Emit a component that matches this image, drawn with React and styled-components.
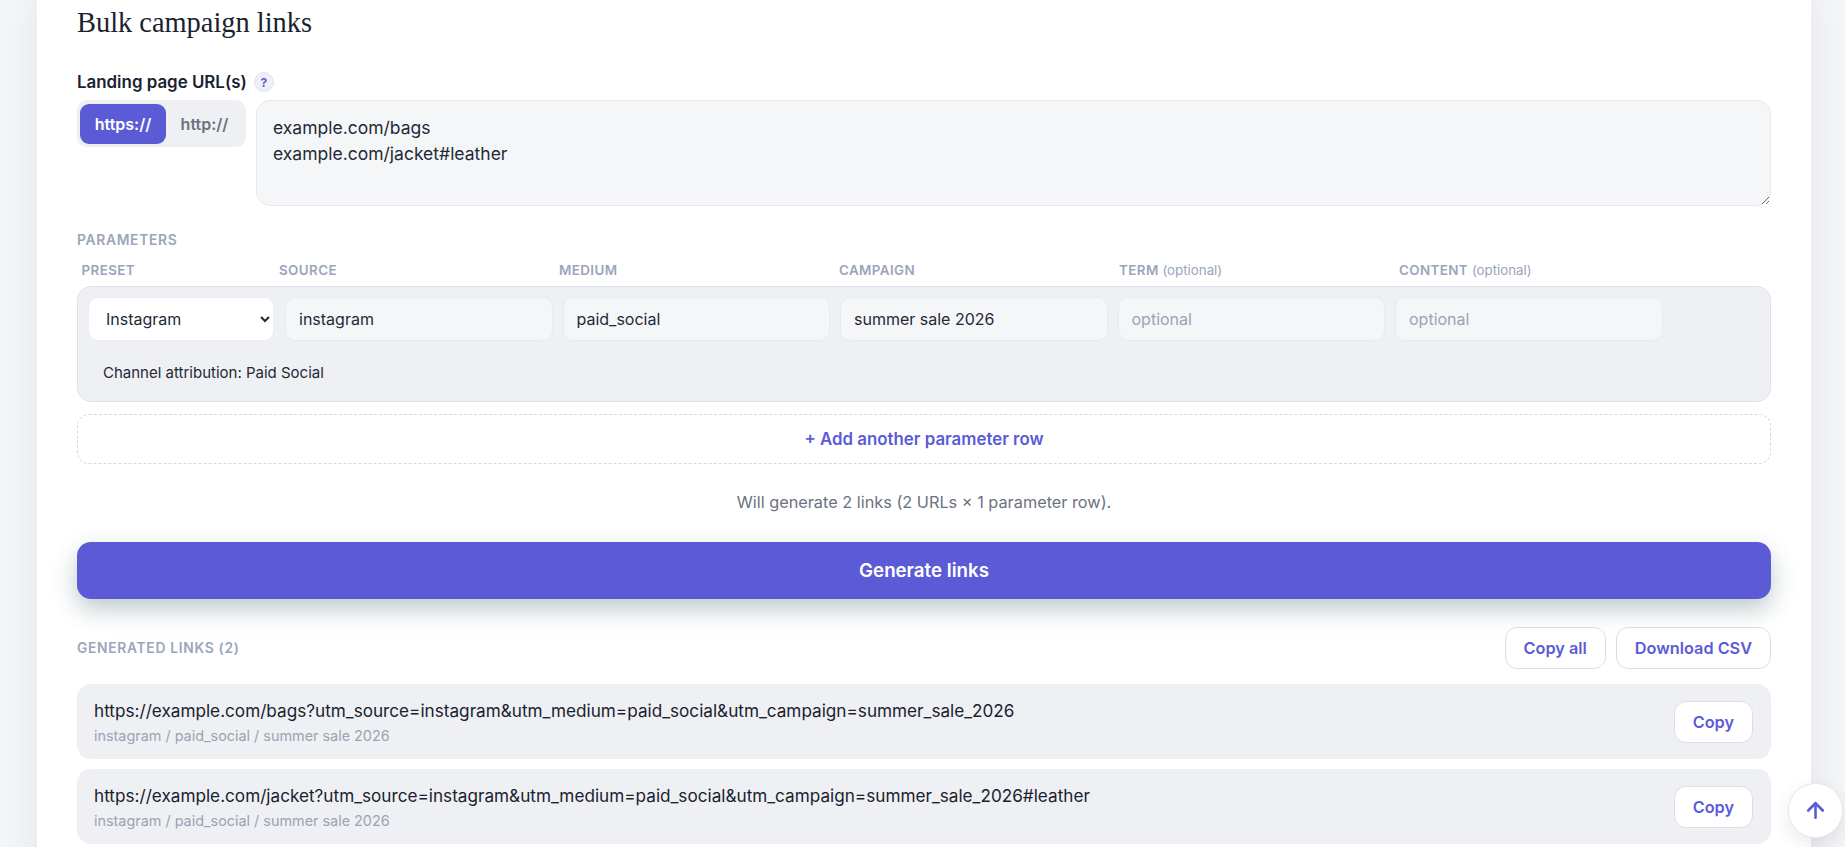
import styled, { createGlobalStyle } from 'styled-components';
import { ArrowUp } from 'lucide-react';

const GlobalStyle = createGlobalStyle`
  html, body {
    margin: 0;
    height: 100%;
    overflow: hidden;
    background: #f4f5f7;
  }
  * { box-sizing: border-box; }
`

const Page = styled.div`
  height: 847px;
  overflow: hidden;
  padding-left: 37px;
  font-family: Inter, 'Liberation Sans', sans-serif;
  color: #1f2937;
`

const Card = styled.main`
  width: 1774px;
  min-height: 900px;
  padding: 0 40px;
  background: #fff;
  box-shadow: 0 0 32px rgba(30, 40, 70, 0.08);
`

const Title = styled.h1`
  margin: 0 0 27px;
  font-family: 'Liberation Serif', serif;
  font-size: 28.4px;
  font-weight: 400;
  line-height: 45px;
  color: #1a2230;
`

const FieldLabel = styled.div`
  display: flex;
  align-items: center;
  gap: 7px;
  height: 20px;
  margin-bottom: 8px;
  font-size: 16.9px;
  font-weight: 600;
  color: #1a2230;
`

const Help = styled.span`
  display: flex;
  align-items: center;
  justify-content: center;
  width: 20px;
  height: 20px;
  border-radius: 50%;
  border: 1px solid #e2e4ea;
  background: #eef0f5;
  font-size: 12px;
  font-weight: 700;
  color: #5b5bd6;
`

const UrlRow = styled.div`
  display: flex;
  align-items: flex-start;
  gap: 10px;
`

const Protocols = styled.div`
  display: flex;
  flex: none;
  width: 169px;
  height: 47px;
  padding: 4px 3px;
  border-radius: 10px;
  background: #eef0f3;
`

const Protocol = styled.button`
  flex: none;
  width: ${p => (p.$active ? '86px' : '77px')};
  height: 40px;
  padding: 0;
  border: none;
  border-radius: 9px;
  background: ${p => (p.$active ? '#5b5bd6' : 'transparent')};
  color: ${p => (p.$active ? '#fff' : '#6b7280')};
  font-family: inherit;
  font-size: 16px;
  font-weight: 600;
`

const UrlInput = styled.textarea`
  flex: 1;
  display: block;
  height: 106px;
  padding: 14px 16px;
  resize: vertical;
  border: 1px solid #e7e9ed;
  border-radius: 14px;
  background: #f4f6f8;
  color: #1f2937;
  font-family: inherit;
  font-size: 17.5px;
  line-height: 26px;
  outline: none;
`

const SectionLabel = styled.div`
  margin-top: ${p => (p.$flush ? '0' : '26px')};
  font-size: 13.8px;
  font-weight: 600;
  line-height: 16px;
  letter-spacing: 0.7px;
  text-transform: uppercase;
  color: #9aa5bb;
`

const ParamHeader = styled.div`
  display: grid;
  grid-template-columns: 185.5px repeat(5, 268px);
  column-gap: 12px;
  margin-top: 14px;
  padding-left: 4.5px;
`

const ParamHeading = styled.span`
  font-size: 13.4px;
  font-weight: 600;
  line-height: 16px;
  letter-spacing: 0.4px;
  text-transform: uppercase;
  color: #9aa5bb;

  em {
    font-size: 13.3px;
    font-style: normal;
    font-weight: 400;
    letter-spacing: 0;
    text-transform: none;
  }
`

const ParamPanel = styled.div`
  margin-top: 8px;
  height: 116px;
  padding: 10px 10px 0;
  border: 1px solid #dfe1e6;
  border-radius: 14px;
  background: #eef0f3;
`

const ParamFields = styled.div`
  display: grid;
  grid-template-columns: 187px repeat(5, 266.5px);
  column-gap: 11px;
`

const PresetSelect = styled.select`
  height: 44px;
  margin-right: 1px;
  padding: 0 0 0 13px;
  border: 1px solid #eceef2;
  border-radius: 10px;
  background-color: #fff;
  color: #1f2937;
  font-family: inherit;
  font-size: 16px;
  outline: none;
`

const ParamInput = styled.input`
  height: 44px;
  min-width: 0;
  margin-left: -1px;
  padding: 0 13px;
  border: 1px solid #e9ebef;
  border-radius: 10px;
  background: #f4f6f8;
  color: #1f2937;
  font-family: inherit;
  font-size: 16px;
  outline: none;

  &::placeholder {
    color: #9ca3b4;
    opacity: 1;
  }
`

const Attribution = styled.div`
  margin: 22px 0 0 15px;
  font-size: 15px;
  line-height: 20px;
  color: #1f2937;
`

const AddRow = styled.button`
  display: block;
  width: 100%;
  height: 50px;
  margin-top: 12px;
  border: 1px dashed #d5d8de;
  border-radius: 12px;
  background: #fff;
  color: #5b5bd6;
  font-family: inherit;
  font-size: 16.85px;
  font-weight: 600;
`

const Summary = styled.p`
  margin: 28px 0 30px;
  text-align: center;
  font-size: 16.3px;
  line-height: 20px;
  color: #6b7280;
`

const Generate = styled.button`
  display: block;
  width: 100%;
  height: 57px;
  border: none;
  border-radius: 14px;
  background: #5b5bd6;
  color: #fff;
  font-family: inherit;
  font-size: 18.7px;
  font-weight: 600;
  box-shadow: 0 10px 24px rgba(40, 75, 85, 0.3);
`

const ResultsBar = styled.div`
  display: flex;
  align-items: center;
  justify-content: space-between;
  margin: 28px 0 15px;
`

const Actions = styled.div`
  display: flex;
  gap: 10px;
`

const OutlineButton = styled.button`
  height: 42px;
  padding: 0 18px;
  border: 1px solid #dcdee4;
  border-radius: 12px;
  background: #fff;
  color: #5b5bd6;
  font-family: inherit;
  font-size: 16.25px;
  font-weight: 600;
`

const LinkList = styled.div`
  display: flex;
  flex-direction: column;
  gap: 10px;
`

const LinkRow = styled.div`
  display: flex;
  align-items: center;
  justify-content: space-between;
  height: 75px;
  padding: 0 18px 0 17px;
  border-radius: 14px;
  background: #eef0f3;
`

const LinkText = styled.div`
  padding-top: 3px;
`

const LinkUrl = styled.div`
  font-size: 17.16px;
  line-height: 20px;
  color: #1a2230;
`

const LinkMeta = styled.div`
  margin-top: 6px;
  font-size: 14.4px;
  line-height: 18px;
  color: #9ca3b4;
`

const ScrollTop = styled.button`
  position: fixed;
  right: 2px;
  bottom: 9px;
  display: flex;
  align-items: center;
  justify-content: center;
  width: 55px;
  height: 55px;
  padding: 0;
  border: 1px solid #e5e7eb;
  border-radius: 50%;
  background: #fff;
  color: #5b5bd6;
  box-shadow: 0 6px 18px rgba(30, 40, 70, 0.1);
`

const columns = [
  { name: 'Preset' },
  { name: 'Source' },
  { name: 'Medium' },
  { name: 'Campaign' },
  { name: 'Term', optional: true },
  { name: 'Content', optional: true },
]

const links = [
  'https://example.com/bags?utm_source=instagram&utm_medium=paid_social&utm_campaign=summer_sale_2026',
  'https://example.com/jacket?utm_source=instagram&utm_medium=paid_social&utm_campaign=summer_sale_2026#leather',
]

function App() {
  return (
    <Page>
      <GlobalStyle />
      <Card>
        <Title>Bulk campaign links</Title>
        <FieldLabel>Landing page URL(s) <Help>?</Help></FieldLabel>
        <UrlRow>
          <Protocols>
            <Protocol $active>https://</Protocol>
            <Protocol>http://</Protocol>
          </Protocols>
          <UrlInput defaultValue={'example.com/bags\nexample.com/jacket#leather'} />
        </UrlRow>

        <SectionLabel>Parameters</SectionLabel>
        <ParamHeader>
          {columns.map(c => (
            <ParamHeading key={c.name}>
              {c.name} {c.optional && <em>(optional)</em>}
            </ParamHeading>
          ))}
        </ParamHeader>
        <ParamPanel>
          <ParamFields>
            <PresetSelect defaultValue="Instagram">
              <option>Instagram</option>
              <option>Facebook</option>
              <option>Newsletter</option>
            </PresetSelect>
            <ParamInput defaultValue="instagram" />
            <ParamInput defaultValue="paid_social" />
            <ParamInput defaultValue="summer sale 2026" />
            <ParamInput placeholder="optional" />
            <ParamInput placeholder="optional" />
          </ParamFields>
          <Attribution>Channel attribution: Paid Social</Attribution>
        </ParamPanel>
        <AddRow>+ Add another parameter row</AddRow>
        <Summary>Will generate 2 links (2 URLs × 1 parameter row).</Summary>
        <Generate>Generate links</Generate>

        <ResultsBar>
          <SectionLabel as="span" $flush>Generated links (2)</SectionLabel>
          <Actions>
            <OutlineButton>Copy all</OutlineButton>
            <OutlineButton>Download CSV</OutlineButton>
          </Actions>
        </ResultsBar>
        <LinkList>
          {links.map(url => (
            <LinkRow key={url}>
              <LinkText>
                <LinkUrl>{url}</LinkUrl>
                <LinkMeta>instagram / paid_social / summer sale 2026</LinkMeta>
              </LinkText>
              <OutlineButton>Copy</OutlineButton>
            </LinkRow>
          ))}
        </LinkList>
      </Card>
      <ScrollTop aria-label="Back to top"><ArrowUp size={25} strokeWidth={2.5} /></ScrollTop>
    </Page>
  );
}

export default App;
